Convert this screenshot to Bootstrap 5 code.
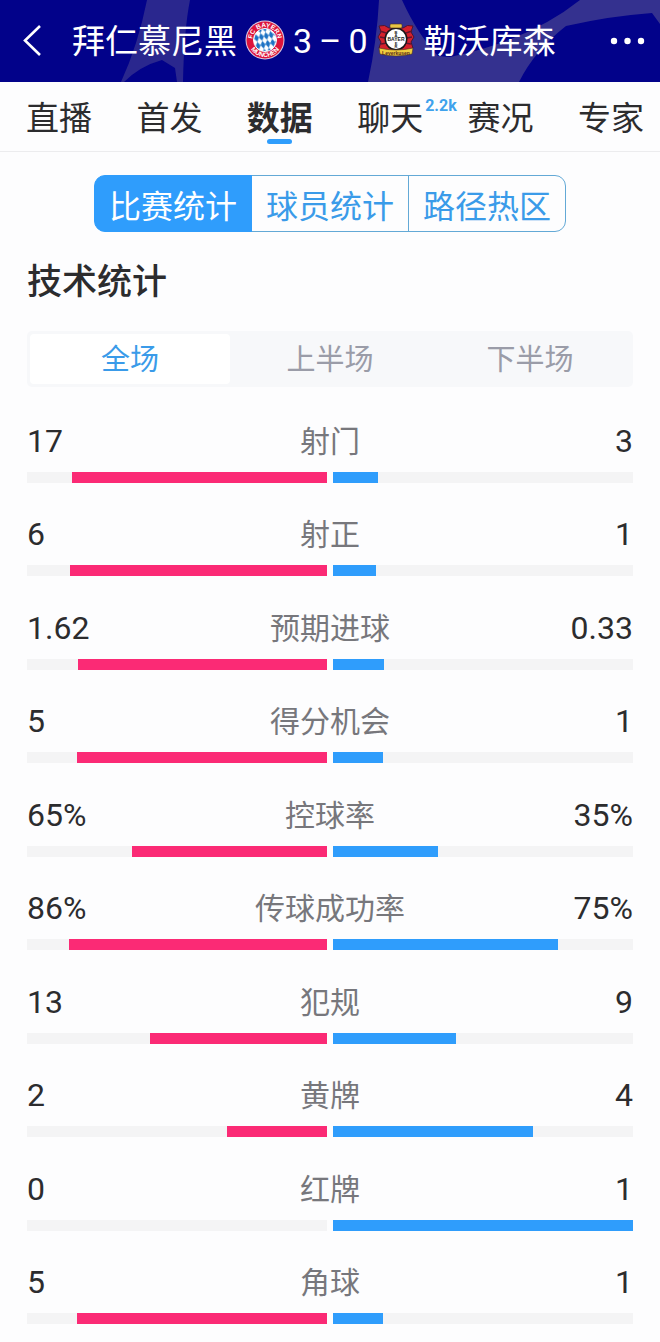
<!DOCTYPE html>
<html lang="zh-CN">
<head>
<meta charset="utf-8">
<meta name="viewport" content="width=device-width, initial-scale=1">
<title>拜仁慕尼黑 3 - 0 勒沃库森</title>
<link href="https://cdn.jsdelivr.net/npm/bootstrap@5.3.0/dist/css/bootstrap.min.css" rel="stylesheet">
<style>
  :root { --accent: #2f9dfc; --home: #fb2a75; --ink: #2c2c2e; --soft: #77777c; }
  body { font-family: Roboto, "Noto Sans CJK SC", sans-serif; color: var(--ink); background: #fdfdfe; }
  .match-bar { height: 82px; background: #02028a; padding: 0 14px 0 20px; }
  .match-bar .backdrop { inset: 0; }
  .match-title { font-size: 33px; line-height: 40px; gap: 8px; margin-left: 28px; }
  .match-title svg { margin-bottom: 2px; }
  .team-name { padding-top: 2px; }
  .score { font-size: 34px; gap: 7px; }
  .icon-btn { color: #fff; line-height: 0; }
  .section-tabs { height: 70px; padding: 0 16px 0 26px; border-bottom: 1px solid #ececee; }
  .section-tabs a { font-size: 33px; height: 70px; line-height: 73px; color: var(--ink); text-decoration: none; }
  .section-tabs a.active { font-weight: 700; }
  .section-tabs a.active::after { content: ""; position: absolute; left: 50%; bottom: 8px; width: 25px; height: 5px; margin-left: -13px; border-radius: 3px; background: var(--accent); }
  .chat-count { left: 100%; top: 14px; font-size: 16px; line-height: 20px; font-weight: 700; color: #3fa2ec; padding-left: 2px; }
  .view-switch { width: 71.5%; margin-top: 23px; }
  .view-switch .btn { --bs-btn-color: #3a9be9; --bs-btn-border-color: #63a9d6; --bs-btn-active-bg: var(--accent); --bs-btn-active-border-color: var(--accent); --bs-btn-active-color: #fff; --bs-btn-border-radius: 11px; flex: 1 1 0; padding: 6px 0 0; height: 57px; font-size: 32px; line-height: 50px; white-space: nowrap; }
  .stats { padding: 0 27px 16px; }
  .stats h1 { font-size: 35px; line-height: 50px; font-weight: 500; margin: 26px 0 23px; }
  .half-switch { height: 56px; padding: 3px; background: #f7f8fa; border-radius: 5px; }
  .half-switch button { flex: 1 1 0; border: 0; border-radius: 4px; background: none; color: #9a9ca8; font-size: 29px; line-height: 40px; padding: 2px 0 0; }
  .half-switch button.active { background: #fff; color: #3a9be9; }
  .stat-list { margin: 33px 0 0; }
  .stat-list li { margin-bottom: 30px; }
  .stat-list li:nth-child(even) { margin-bottom: 31px; }
  .stat-list li:last-child { margin-bottom: 0; }
  .stat-line { font-size: 32px; line-height: 42px; }
  .stat-line .topic { font-size: 30px; line-height: 44px; color: var(--soft); }
  .bars { gap: 6px; margin-top: 8px; }
  .bars .progress { --bs-progress-height: 11px; --bs-progress-bg: #f4f4f5; --bs-progress-border-radius: 0; flex: 1 1 0; }
  .bar-home { background: var(--home); }
  .bar-away { background: var(--accent); }
</style>
</head>
<body>
<header class="match-bar position-relative d-flex align-items-center">
  <svg class="backdrop position-absolute w-100 h-100" viewBox="0 0 660 82" preserveAspectRatio="none" aria-hidden="true">
    <g fill="#34318f">
      <path d="M147 0H190Q184 30 183 82H177L175 68L162 60Q140 66 124 82H121Q138 45 147 0Z" opacity=".8"/>
      <path d="M379 0H402Q418 35 438 56L450 57Q530 40 580 0H660V24L652 13Q610 16 566 26Q535 50 519 82H368Q377 40 379 0Z"/>
    </g>
  </svg>
  <button class="btn p-0 border-0 icon-btn position-relative" type="button" aria-label="返回">
    <svg width="24" height="34" viewBox="0 0 24 34" fill="none" stroke="currentColor" stroke-width="2.6"><path d="M20 2L5 16.500L20 31"/></svg>
  </button>
  <div class="match-title position-relative d-flex align-items-center text-white text-nowrap">
    <span class="team-name">拜仁慕尼黑</span>
    <svg width="40" height="40" viewBox="0 0 40 40" role="img" aria-label="FC Bayern">
      <defs>
        <pattern id="lozenge" width="5" height="8" patternUnits="userSpaceOnUse" patternTransform="rotate(-12)"><rect width="5" height="8" fill="#fff"/><path d="M2.500 0L5 4L2.500 8L0 4Z" fill="#1d72c4"/></pattern>
        <path id="arcTop" d="M7.300 20A12.700 12.700 0 0 1 32.700 20"/>
        <path id="arcBottom" d="M3 20A17 17 0 0 0 37 20"/>
      </defs>
      <circle cx="20" cy="20" r="19.500" fill="#d9c9e2"/>
      <circle cx="20" cy="20" r="18.500" fill="#dc143c"/>
      <circle cx="20" cy="20" r="11.500" fill="url(#lozenge)" stroke="#fff" stroke-width="1"/>
      <g fill="#fff" font-family="Liberation Sans, sans-serif" font-weight="700" font-size="6.500" text-anchor="middle">
        <text><textPath href="#arcTop" startOffset="50%">FC BAYERN</textPath></text>
        <text><textPath href="#arcBottom" startOffset="50%">MÜNCHEN</textPath></text>
      </g>
    </svg>
    <span class="score d-flex"><span>3</span><span>–</span><span>0</span></span>
    <svg width="40" height="34" viewBox="0 0 40 34" role="img" aria-label="Bayer Leverkusen">
      <path d="M3 3Q9 1 13 5H27Q31 1 37 3L35 9L38 14L35 19L37 25L31 28H9L3 25L5 19L2 14L5 9Z" fill="#d5202c" stroke="#471735" stroke-width="1"/>
      <path d="M4 8l6 2M4 14l5 1M5 21l6-1M36 8l-6 2M36 14l-5 1M35 21l-6-1" stroke="#62152c" stroke-width="1.500"/>
      <circle cx="20" cy="16" r="11.500" fill="#191719"/>
      <circle cx="20" cy="16" r="10" fill="#fff"/>
      <rect x="14" y="1" width="12" height="4" rx="1" fill="#e9c545" stroke="#4a3020" stroke-width=".6"/>
      <g fill="#222" font-family="Liberation Sans, sans-serif" font-weight="700" text-anchor="middle">
        <text x="20" y="18" font-size="5">BAYER</text>
        <g font-size="4"><text x="20" y="10.500">B</text><text x="20" y="14">A</text><text x="20" y="21.500">E</text><text x="20" y="25">R</text></g>
      </g>
      <path d="M3 25Q20 29 37 25L36 31Q20 35 4 31Z" fill="#f0cd3e" stroke="#4a3020" stroke-width=".6"/>
      <text x="20" y="31.500" font-family="Liberation Sans, sans-serif" font-size="5" font-weight="700" fill="#5a2a18" text-anchor="middle">Leverkusen</text>
    </svg>
    <span class="team-name">勒沃库森</span>
  </div>
  <button class="btn p-0 border-0 icon-btn position-relative ms-auto" type="button" aria-label="更多">
    <svg width="38" height="20" viewBox="0 0 38 20" fill="currentColor"><circle cx="6" cy="10" r="3.200"/><circle cx="19.500" cy="10" r="3.200"/><circle cx="33" cy="10" r="3.200"/></svg>
  </button>
</header>

<nav class="section-tabs d-flex justify-content-between text-nowrap">
  <a href="#live">直播</a>
  <a href="#lineup">首发</a>
  <a href="#data" class="active position-relative" aria-current="page">数据</a>
  <a href="#chat" class="position-relative">聊天<span class="chat-count position-absolute">2.2k</span></a>
  <a href="#events">赛况</a>
  <a href="#experts">专家</a>
</nav>

<div class="d-flex justify-content-center">
  <div class="view-switch btn-group" role="group" aria-label="统计类型">
    <button type="button" class="btn active" aria-pressed="true">比赛统计</button>
    <button type="button" class="btn">球员统计</button>
    <button type="button" class="btn">路径热区</button>
  </div>
</div>

<main class="stats">
  <h1>技术统计</h1>
  <div class="half-switch d-flex" role="group" aria-label="时段">
    <button type="button" class="active" aria-pressed="true">全场</button>
    <button type="button">上半场</button>
    <button type="button">下半场</button>
  </div>
  <ul class="stat-list list-unstyled" id="statList"></ul>
</main>

<script src="https://cdn.jsdelivr.net/npm/bootstrap@5.3.0/dist/js/bootstrap.bundle.min.js"></script>
<script>
  // topic, home value, away value, home bar %, away bar %
  const stats = [
    ['射门', '17', '3', 85, 15],
    ['射正', '6', '1', 85.7, 14.3],
    ['预期进球', '1.62', '0.33', 83.1, 16.9],
    ['得分机会', '5', '1', 83.3, 16.7],
    ['控球率', '65%', '35%', 65, 35],
    ['传球成功率', '86%', '75%', 86, 75],
    ['犯规', '13', '9', 59.1, 40.9],
    ['黄牌', '2', '4', 33.3, 66.7],
    ['红牌', '0', '1', 0, 100],
    ['角球', '5', '1', 83.3, 16.7]
  ];
  document.getElementById('statList').innerHTML = stats.map(([topic, home, away, h, a]) => `
    <li>
      <div class="stat-line row g-0">
        <span class="col">${home}</span>
        <span class="topic col-auto">${topic}</span>
        <span class="col text-end">${away}</span>
      </div>
      <div class="bars d-flex">
        <div class="progress justify-content-end"><div class="bar-home" style="width:${h}%"></div></div>
        <div class="progress"><div class="bar-away" style="width:${a}%"></div></div>
      </div>
    </li>`).join('');
</script>
</body>
</html>
